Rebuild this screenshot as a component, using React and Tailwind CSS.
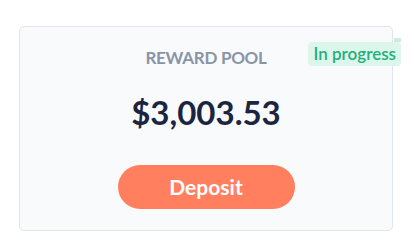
import React from 'react';

const RewardPoolCard = ({ amount = '$3,003.53', status = 'In progress' }) => {
  return (
    <div className="relative ml-[19px] mt-[26px] w-[374px] h-[205px] rounded-[5px] border border-[#dfe4ef] bg-[#f8fafc] flex flex-col items-center pt-[21px]">
      {/* status ribbon */}
      <div className="absolute right-[-9px] top-[11px] flex flex-col items-end">
        <div className="w-[7px] h-[4px] bg-[#c9eedf]" />
        <div className="rounded-[4px] bg-[#dcf6ec] px-[5px] h-[24px] flex items-center text-[17px] font-semibold text-[#22b07a]">
          {status}
        </div>
      </div>
      <p className="text-[17px] font-bold leading-[20px] tracking-[-0.3px] text-[#8a94a7]">REWARD POOL</p>
      <p className="mt-[24px] text-[33px] font-bold leading-[40px] text-[#1b2440]">{amount}</p>
      <button
        type="button"
        className="mt-[33px] w-[177px] h-[44px] rounded-full bg-[#ff7f5f] text-white text-[21px] font-bold flex items-center justify-center"
      >
        Deposit
      </button>
    </div>
  );
};

export default function App() {
  return (
    <div className="w-[414px] h-[248px] bg-white overflow-hidden font-[family-name:Lato,'Liberation_Sans',sans-serif]">
      <RewardPoolCard />
    </div>
  );
}
